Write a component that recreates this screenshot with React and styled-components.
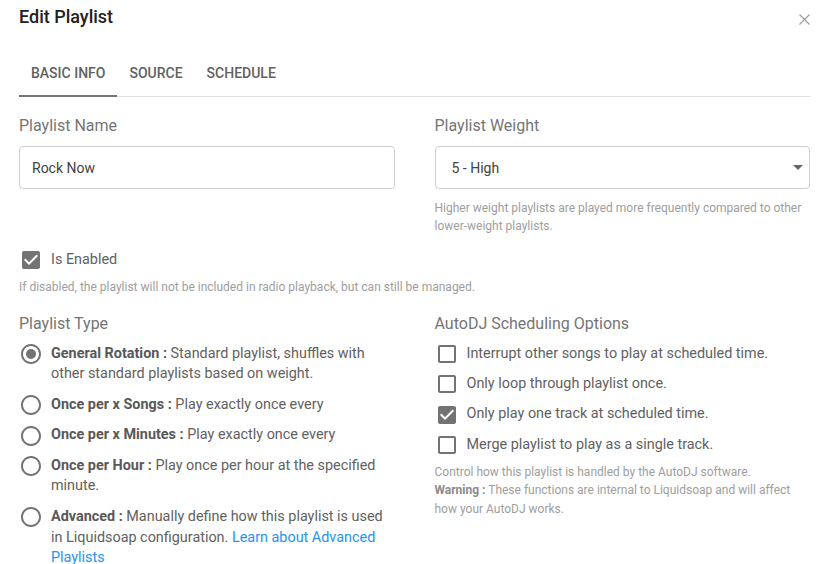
import React from "react";
import styled, { createGlobalStyle } from "styled-components";

const Global = createGlobalStyle`
  html, body { margin: 0; padding: 0; background: #fff; }
  body { font-family: Roboto, "Noto Sans", "Liberation Sans", sans-serif; color: #616161; }
  * { box-sizing: border-box; }
`;

const Modal = styled.div`
  width: 825px;
  height: 564px;
  overflow: hidden;
  padding: 0 15px 0 19px;
`;

const Header = styled.div`
  height: 49px;
  display: flex;
  justify-content: space-between;
  align-items: flex-start;
  padding-top: 5px;
`;

const Title = styled.h5`
  margin: 0;
  font-size: 18px;
  line-height: 24px;
  font-weight: 500;
  color: #212121;
`;

const Close = styled.button`
  border: 0;
  background: none;
  padding: 0;
  margin: 9px 0 0 0;
  width: 11px;
  height: 11px;
  display: flex;
  cursor: pointer;
`;

const Tabs = styled.div`
  display: flex;
  height: 48px;
  border-bottom: 1px solid #e0e0e0;
`;

const Tab = styled.div`
  height: 48px;
  margin-bottom: -1px;
  padding: 0 12px;
  display: flex;
  align-items: center;
  font-size: 14px;
  font-weight: 500;
  text-transform: uppercase;
  color: #616161;
  border-bottom: 2px solid ${(p) => (p.$active ? "#757575" : "transparent")};
  padding-top: 2px;
`;

const Body = styled.div`
  padding-top: 17px;
`;

const Row = styled.div`
  display: grid;
  grid-template-columns: 1fr 1fr;
  column-gap: 40px;
  align-items: start;
`;

const Group = styled.div`
  display: flex;
  flex-direction: column;
`;

const Label = styled.div`
  font-size: 16px;
  line-height: 24px;
  color: #757575;
  margin-bottom: ${(p) => p.$mb || 8}px;
`;

const Input = styled.div`
  height: 43px;
  border: 1px solid #cfcfcf;
  border-radius: 4px;
  padding: 0 12px;
  display: flex;
  align-items: center;
  font-size: 14px;
  color: #424242;
`;

const Select = styled(Input)`
  justify-content: space-between;
  padding: 0 6px 0 16px;
`;

const Help = styled.div`
  font-size: 12px;
  line-height: 18.6px;
  color: #9e9e9e;
  margin-top: ${(p) => p.$mt || 0}px;
  b { font-weight: 700; color: #8a8a8a; }
`;

const CheckRow = styled.div`
  display: flex;
  align-items: flex-start;
  gap: 8px;
  font-size: 14.4px;
  line-height: 20.8px;
  color: #616161;
  svg { flex: none; margin: -1.6px 0; }
`;

const EnabledRow = styled(CheckRow)`
  margin-top: 12px;
  line-height: 24px;
  svg { margin: 0; }
`;

const Section = styled.div`
  margin-top: ${(p) => p.$mt || 0}px;
`;

const List = styled.div`
  display: flex;
  flex-direction: column;
  gap: 9.6px;
`;

const Strong = styled.b`
  font-weight: 700;
  color: #585858;
`;

const Link = styled.a`
  color: #2196f3;
  text-decoration: none;
`;

const ICON = "#737373";

const Box = ({ checked }) => (
  <svg width="24" height="24" viewBox="0 0 24 24" fill={ICON}>
    {checked ? (
      <path d="M19 3H5c-1.11 0-2 .9-2 2v14c0 1.1.89 2 2 2h14c1.11 0 2-.9 2-2V5c0-1.1-.89-2-2-2zm-9 14l-5-5 1.41-1.41L10 14.17l7.59-7.59L19 8l-9 9z" />
    ) : (
      <path d="M19 5v14H5V5h14m0-2H5c-1.1 0-2 .9-2 2v14c0 1.1.9 2 2 2h14c1.1 0 2-.9 2-2V5c0-1.1-.9-2-2-2z" />
    )}
  </svg>
);

const Radio = ({ checked }) => (
  <svg width="24" height="24" viewBox="0 0 24 24" fill={ICON}>
    {checked && <circle cx="12" cy="12" r="5" />}
    <path d="M12 2C6.48 2 2 6.48 2 12s4.48 10 10 10 10-4.48 10-10S17.52 2 12 2zm0 18c-4.42 0-8-3.58-8-8s3.58-8 8-8 8 3.58 8 8-3.58 8-8 8z" />
  </svg>
);

const Arrow = () => (
  <svg width="10" height="5" viewBox="0 0 10 5">
    <path d="M0 0h10L5 5z" fill="#666" />
  </svg>
);

const types = [
  { t: "General Rotation", d: "Standard playlist, shuffles with other standard playlists based on weight.", checked: true },
  { t: "Once per x Songs", d: "Play exactly once every" },
  { t: "Once per x Minutes", d: "Play exactly once every" },
  { t: "Once per Hour", d: "Play once per hour at the specified minute." },
];

const opts = [
  { d: "Interrupt other songs to play at scheduled time." },
  { d: "Only loop through playlist once." },
  { d: "Only play one track at scheduled time.", checked: true },
  { d: "Merge playlist to play as a single track." },
];

export default function App() {
  return (
    <>
      <Global />
      <Modal>
        <Header>
          <Title>Edit Playlist</Title>
          <Close aria-label="Close">
            <svg width="11" height="11" viewBox="0 0 11 11">
              <path d="M0.5 0.5L10.5 10.5M10.5 0.5L0.5 10.5" stroke="#9e9e9e" strokeWidth="1.2" />
            </svg>
          </Close>
        </Header>
        <Tabs>
          <Tab $active>Basic Info</Tab>
          <Tab>Source</Tab>
          <Tab>Schedule</Tab>
        </Tabs>
        <Body>
          <Row>
            <Group>
              <Label>Playlist Name</Label>
              <Input>Rock Now</Input>
            </Group>
            <Group>
              <Label>Playlist Weight</Label>
              <Select>
                <span>5 - High</span>
                <Arrow />
              </Select>
              <Help $mt={9.5}>
                Higher weight playlists are played more frequently compared to other lower-weight playlists.
              </Help>
            </Group>
          </Row>
          <EnabledRow>
            <Box checked />
            <span>Is Enabled</span>
          </EnabledRow>
          <Help $mt={6.5}>
            If disabled, the playlist will not be included in radio playback, but can still be managed.
          </Help>
          <Section $mt={15.5}>
            <Row>
              <Group>
                <Label $mb={7.4}>Playlist Type</Label>
                <List>
                  {types.map((x) => (
                    <CheckRow key={x.t}>
                      <Radio checked={x.checked} />
                      <span>
                        <Strong>{x.t} :</Strong> {x.d}
                      </span>
                    </CheckRow>
                  ))}
                  <CheckRow>
                    <Radio />
                    <span>
                      <Strong>Advanced :</Strong> Manually define how this playlist is used in Liquidsoap
                      configuration. <Link href="#">Learn about Advanced Playlists</Link>
                    </span>
                  </CheckRow>
                </List>
              </Group>
              <Group>
                <Label $mb={7.4}>AutoDJ Scheduling Options</Label>
                <List>
                  {opts.map((x) => (
                    <CheckRow key={x.d}>
                      <Box checked={x.checked} />
                      <span>{x.d}</span>
                    </CheckRow>
                  ))}
                </List>
                <Help $mt={7.1}>
                  Control how this playlist is handled by the AutoDJ software.
                  <br />
                  <b>Warning :</b> These functions are internal to Liquidsoap and will affect how your AutoDJ works.
                </Help>
              </Group>
            </Row>
          </Section>
        </Body>
      </Modal>
    </>
  );
}
